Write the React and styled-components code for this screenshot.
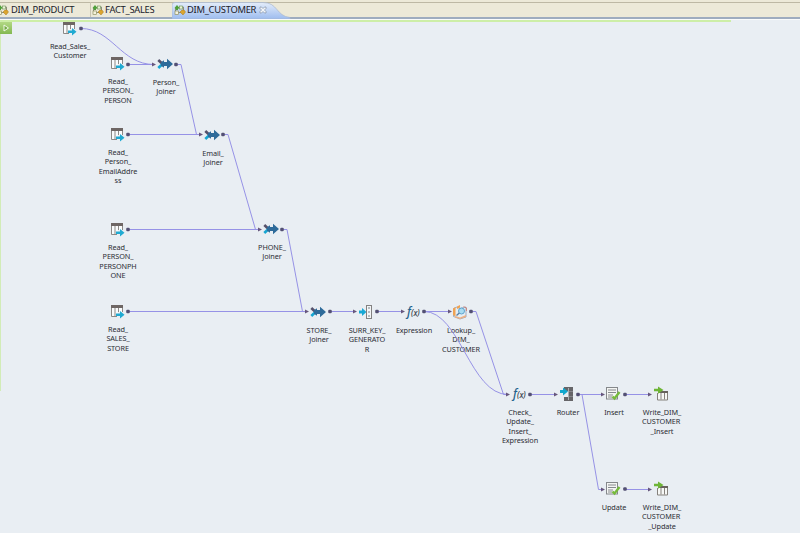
import React from "react";
import styled, { createGlobalStyle } from "styled-components";

const GlobalStyle = createGlobalStyle`
  body { margin: 0; overflow: hidden; background: #e9eef3; font-family: "Noto Sans", sans-serif; }
`;

const Page = styled.div`
  width: 800px;
  height: 533px;
  display: flex;
  flex-direction: column;
  overflow: hidden;
`;

const TabBar = styled.header`
  box-sizing: border-box;
  height: 19px;
  flex: none;
  display: flex;
  padding-top: 2px;
  background: #ece9d8;
  border-bottom: 2px solid #9eacbf;
  box-shadow: inset 0 2px #ece9d8, inset 0 3px #bdb8a4;
`;

const Tab = styled.div`
  box-sizing: border-box;
  position: relative;
  width: ${(p) => p.$width}px;
  height: 15px;
  display: flex;
  align-items: center;
  gap: 1px;
  padding-left: ${(p) => p.$pad || 0}px;
  border-left: ${(p) => (p.$divider ? "1px solid #c9c4b1" : "0")};
  font-size: 9.4px;
  line-height: 15px;
  color: #20212a;
  svg { flex: none; }
`;

const TabShape = styled.svg`
  position: absolute;
  left: 0;
  top: 0;
`;

const TabText = styled.span`
  position: relative;
  margin-left: ${(p) => p.$pull || 0}px;
  white-space: nowrap;
  letter-spacing: -0.28px;
`;

const TabIcon = styled.svg`
  position: relative;
  margin-left: ${(p) => p.$pull || 0}px;
`;

const CloseIcon = styled.svg`
  position: relative;
  margin-left: 2px;
`;

const Canvas = styled.main`
  position: relative;
  flex: 1;
  background: #e9eef3;
  box-shadow: inset 0 1px #f8fafb;
`;

const GreenEdge = styled.div`
  position: absolute;
  left: 0;
  top: 1px;
  width: 731px;
  height: 371px;
  border-top: 2px solid #cdeea7;
  border-left: 1px solid #d2ecb7;
  box-sizing: border-box;
`;

const RunButton = styled.div`
  position: absolute;
  left: 0;
  top: 3px;
  width: 12px;
  height: 12px;
  display: flex;
  align-items: center;
  justify-content: center;
  background: linear-gradient(#b2d884, #83b851);
`;

const Wires = styled.svg`
  position: absolute;
  left: 0;
  top: 0;
`;

const NodeBox = styled.div`
  position: absolute;
  left: ${(p) => p.$x - 30}px;
  top: ${(p) => p.$y - 27}px;
  width: 60px;
  display: flex;
  flex-direction: column;
  align-items: center;
`;

const NodeIcon = styled.svg`
  width: 16px;
  height: 16px;
  overflow: visible;
`;

const NodeLabel = styled.div`
  margin: 6px 0 0 2px;
  font-size: 7.3px;
  line-height: 9.3px;
  letter-spacing: -0.1px;
  color: #2b2d33;
  text-align: center;
  white-space: pre;
`;

function TabGlyph({ pull }) {
  return (
    <TabIcon $pull={pull} width="12" height="12" viewBox="0 0 12 12">
      <path d="M1.500 7V3.500H5M7 8.500H4M7 3H9.500V6" fill="none" stroke="#8c8f7c" />
      <path d="M0.500 4L3 1L5.500 4L4 5V6H2V5Z" fill="#4fa03b" />
      <rect x="5.500" y="2" width="3" height="3" fill="#e9f3d5" stroke="#6a8e50" strokeWidth=".6" />
      <rect x="1" y="7" width="3.500" height="3.500" fill="#f4f2dd" stroke="#83834e" strokeWidth=".6" />
      <path d="M6 8L8 6H10L11.500 8L9 11Z" fill="#dca52e" stroke="#a67822" strokeWidth=".5" />
    </TabIcon>
  );
}

function Formula() {
  return (
    <text x="2" y="11.800" fontFamily="Noto Sans, sans-serif" fontStyle="italic" fontWeight="500" fill="#36404a">
      <tspan fontSize="11.800" fill="#1f628c">f</tspan>
      <tspan fontSize="8">(x)</tspan>
    </text>
  );
}

function Glyph({ kind }) {
  switch (kind) {
    case "read":
      return (
        <>
          <path d="M3 5H13V9H9V13H3Z" fill="#fafbfc" />
          <path d="M2.500 3V13.500H8M6 4V13M9.500 4V9M13.500 3V9" fill="none" stroke="#8b8986" />
          <rect x="2" y="2" width="12" height="3" fill="#6e6664" />
          <path d="M7 10.500H11V8L15.500 11.700L11 15.400V13H7Z" fill="#20aad2" />
        </>
      );
    case "join":
      return (
        <>
          <path d="M1.300 4L5.500 8" stroke="#55516b" strokeWidth="2.600" fill="none" />
          <path d="M1.300 12L5.500 8" stroke="#16a5d1" strokeWidth="2.600" fill="none" />
          <path d="M4 6.200L7 4.200V6H10V2.800L16 8L10 13.200V10H7V11.800L4 9.800Z" fill="#2e6b9a" />
        </>
      );
    case "key":
      return (
        <>
          <path d="M1 6.500H4V4L8.500 8L4 12V9.500H1Z" fill="#17a8d5" />
          <rect x="8.500" y="1.500" width="5" height="13" fill="#f3f5f6" stroke="#828181" />
          <path d="M11 3V5M11 7V9M11 11V13" stroke="#77838d" />
        </>
      );
    case "formula":
      return <Formula />;
    case "lookup":
      return (
        <>
          <path d="M1.500 4.500L5 3L8 4.500L14 3V13L8 15L1.500 12.500Z" fill="#e4edf3" stroke="#8b9cb6" strokeWidth=".8" />
          <path d="M1 4.500L3.500 3V12.500L1 11ZM5 2.500L8 1V3.500L5 5Z" fill="#f0a252" />
          <path d="M3.500 12L8 13.500L14 11V13L8 15L3 13.500Z" fill="#ecaf83" />
          <circle cx="9.500" cy="7" r="3" fill="#a8dcf2" stroke="#559bc8" strokeWidth=".9" />
          <path d="M7.300 9L4.500 11.500" stroke="#577ca2" strokeWidth="1.300" />
          <path d="M11.500 2.500L14.500 4V7" fill="none" stroke="#d17968" strokeWidth=".8" />
        </>
      );
    case "router":
      return (
        <>
          <path d="M5 1H14V15H5V11H9V5H5Z" fill="#666568" />
          <path d="M9.500 2V14" stroke="#bfc1c4" strokeWidth=".8" />
          <path d="M10 5.500H14M10 10.500H14" stroke="#8f9195" strokeWidth=".8" />
          <path d="M1 4H4V1.500L9 5.500L4 9.500V7H1Z" fill="#13a8ce" />
        </>
      );
    case "strategy":
      return (
        <>
          <rect x="1.500" y="1.500" width="11" height="11.500" fill="#f4f5f3" stroke="#85888b" />
          <path d="M3 4H11M3 6.500H11M3 9H8M3 11H7" stroke="#85898e" strokeWidth="1.100" />
          <path d="M7.500 10.500L9.500 12.500L14.500 6" fill="none" stroke="#75ba3c" strokeWidth="2.400" />
        </>
      );
    default:
      return (
        <>
          <path d="M4.500 7V14H14.500V5M8 7V13.500M11.500 7V13.500" fill="#f7f8f6" stroke="#85817c" />
          <path d="M6 6H15" stroke="#68625e" strokeWidth="2" />
          <path d="M1 2.700H5V.5L10.500 4L5 7.800V5.300H1Z" fill="#6eb536" />
        </>
      );
  }
}

const nodes = [
  [69, 28, "read", "Read_Sales_\nCustomer"],
  [117, 63, "read", "Read_\nPERSON_\nPERSON"],
  [165, 64, "join", "Person_\nJoiner"],
  [117, 134, "read", "Read_\nPerson_\nEmailAddre\nss"],
  [212, 135, "join", "Email_\nJoiner"],
  [117, 229, "read", "Read_\nPERSON_\nPERSONPH\nONE"],
  [271, 229, "join", "PHONE_\nJoiner"],
  [117, 311, "read", "Read_\nSALES_\nSTORE"],
  [318, 312, "join", "STORE_\nJoiner"],
  [366, 312, "key", "SURR_KEY_\nGENERATO\nR"],
  [413, 312, "formula", "Expression"],
  [460, 312, "lookup", "Lookup_\nDIM_\nCUSTOMER"],
  [519, 394, "formula", "Check_\nUpdate_\nInsert_\nExpression"],
  [567, 394, "router", "Router"],
  [613, 394, "strategy", "Insert"],
  [661, 394, "write", "Write_DIM_\nCUSTOMER \n_Insert"],
  [613, 489, "strategy", "Update"],
  [661, 489, "write", "Write_DIM_\nCUSTOMER \n_Update"],
];

const wirePaths = [
  "M81 28.500C112 28.500 121 64.500 154 64.500",
  "M128 64.500H154",
  "M176 64.500H181L196.500 134.500H200",
  "M128 134.500H200",
  "M223 134.500H228L255.500 229.500H260",
  "M128 229.500H260",
  "M282 229.500H287L302.500 311.500H307",
  "M128 311.500H307",
  "M329 311.500H355",
  "M377 311.500H403",
  "M424 311.500H450",
  "M424 311.500C460 311.500 470 394.500 508 394.500",
  "M471 311.500H476L503.500 394.500H508",
  "M530 394.500H556",
  "M577 394.500H603",
  "M577 394.500H582L598.500 489.500H603",
  "M624 394.500H650",
  "M624 489.500H650",
];

const outputs = [[81, 28.5], [128, 64.5], [176, 64.5], [128, 134.5], [223, 134.5], [128, 229.5], [282, 229.5], [128, 311.5], [330, 311.5], [377, 311.5], [424, 311.5], [471, 311.5], [530, 394.5], [578, 394.5], [625, 394.5], [625, 489]];
const inputs = [[154, 64.5], [201, 134.5], [260, 229.5], [307, 311.5], [355, 311.5], [403, 311.5], [450, 311.5], [508, 394.5], [556, 394.5], [603, 394.5], [650, 394.5], [603, 489.5], [650, 489.5]];

export default function App() {
  return (
    <>
      <GlobalStyle />
      <Page>
        <TabBar>
          <Tab $width={90}>
            <TabGlyph pull={-3} />
            <TabText $pull={1}>DIM_PRODUCT</TabText>
          </Tab>
          <Tab $width={82} $pad={1} $divider>
            <TabGlyph />
            <TabText>FACT_SALES</TabText>
          </Tab>
          <Tab $width={120} $pad={2}>
            <TabShape width="120" height="17">
              <defs>
                <linearGradient id="activeTab" x1="0" y1="0" x2="0" y2="1">
                  <stop offset="0" stopColor="#e4edfa" />
                  <stop offset="1" stopColor="#9dbcef" />
                </linearGradient>
              </defs>
              <path d="M0 17V3Q0 .5 3 .5H91C106 .5 104 14 118 15.500V17Z" fill="url(#activeTab)" stroke="#a6b6ce" strokeWidth=".7" />
            </TabShape>
            <TabGlyph />
            <TabText>DIM_CUSTOMER</TabText>
            <CloseIcon width="8" height="8" viewBox="0 0 8 8">
              <path d="M1 1H2.500L4 2.500L5.500 1H7V2.500L5.500 4L7 5.500V7H5.500L4 5.500L2.500 7H1V5.500L2.500 4L1 2.500Z" fill="#f3f6fa" stroke="#8290a5" strokeWidth=".7" />
            </CloseIcon>
          </Tab>
        </TabBar>
        <Canvas>
          <GreenEdge />
          <RunButton>
            <svg width="8" height="8" viewBox="0 0 8 8">
              <path d="M2 1L6.500 4L2 7Z" fill="#72ab43" stroke="#f1f8e8" />
            </svg>
          </RunButton>
          {nodes.map(([x, y, kind, label]) => (
            <NodeBox key={`${x}-${y}`} $x={x} $y={y}>
              <NodeIcon viewBox="0 0 16 16"><Glyph kind={kind} /></NodeIcon>
              <NodeLabel>{label}</NodeLabel>
            </NodeBox>
          ))}
          <Wires width="800" height="514" viewBox="0 19 800 514">
            {wirePaths.map((d) => <path key={d} d={d} fill="none" stroke="#9692e6" strokeWidth="1" />)}
            {outputs.map(([x, y]) => <rect key={`${x}-${y}`} x={x - 1.8} y={y - 1.8} width="3.600" height="3.600" rx="1.200" fill="#535073" />)}
            {inputs.map(([x, y]) => <path key={`${x}-${y}`} d={`M${x - 2} ${y - 2}L${x + 2} ${y}L${x - 2} ${y + 2}Z`} fill="#66567c" />)}
          </Wires>
        </Canvas>
      </Page>
    </>
  );
}
